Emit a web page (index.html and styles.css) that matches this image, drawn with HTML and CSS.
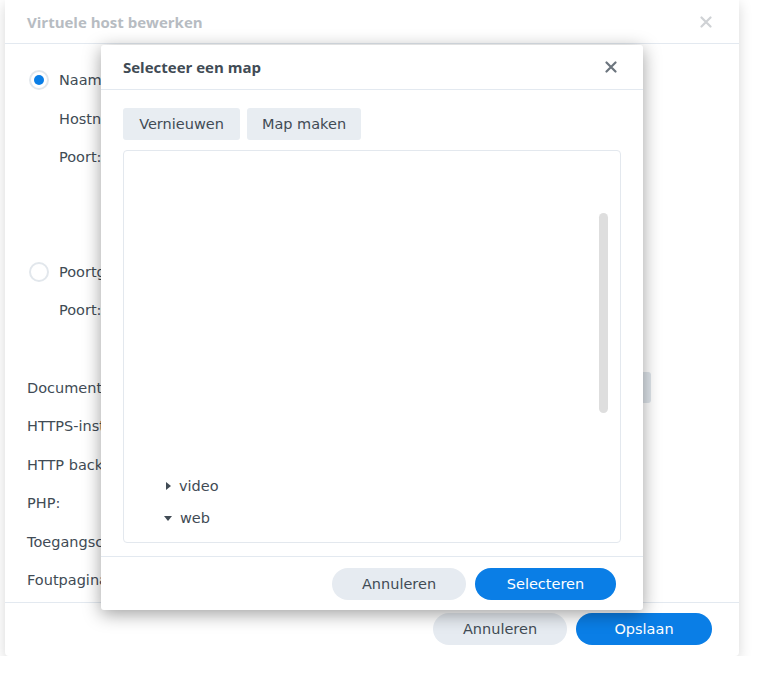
FILE: index.html
```html
<!DOCTYPE html>
<html lang="nl">
<head>
    <meta charset="UTF-8">
    <title>Virtuele host bewerken</title>
    <link rel="stylesheet" href="styles.css">
</head>
<body>
    <div class="window">
        <div class="win-header">
            <span class="win-title">Virtuele host bewerken</span>
            <svg class="close faded" width="12" height="12" viewBox="0 0 12 12"><path d="M1.5 1.5L10.5 10.5M10.5 1.5L1.5 10.5" stroke="currentColor" stroke-width="2.2" stroke-linecap="round"/></svg>
        </div>
        <div class="win-body">
            <div class="row"><span class="radio checked"></span><span>Naam</span></div>
            <div class="row indent"><span>Hostnaam:</span></div>
            <div class="row indent"><span>Poort:</span></div>
            <div class="spacer"></div>
            <div class="row"><span class="radio"></span><span>Poortgebaseerd</span></div>
            <div class="row indent"><span>Poort:</span></div>
            <div class="gap"></div>
            <div class="row"><span class="label">Documentroot:</span><span class="field"></span></div>
            <div class="row"><span class="label">HTTPS-instellingen:</span></div>
            <div class="row"><span class="label">HTTP back-endserver:</span></div>
            <div class="row"><span class="label">PHP:</span></div>
            <div class="row"><span class="label">Toegangscontroleprofiel:</span></div>
            <div class="row"><span class="label">Foutpaginaprofiel:</span></div>
        </div>
        <div class="win-footer">
            <button class="btn">Annuleren</button>
            <button class="btn primary">Opslaan</button>
        </div>
    </div>

    <div class="dialog">
        <div class="dlg-header">
            <span class="dlg-title">Selecteer een map</span>
            <svg class="close" width="12" height="12" viewBox="0 0 12 12"><path d="M1.5 1.5L10.5 10.5M10.5 1.5L1.5 10.5" stroke="currentColor" stroke-width="2.2" stroke-linecap="round"/></svg>
        </div>
        <div class="dlg-body">
            <div class="toolbar">
                <button class="tool">Vernieuwen</button>
                <button class="tool">Map maken</button>
            </div>
            <div class="tree">
                <div class="scrollbar"></div>
                <div class="tree-list">
                    <div class="node"><span class="arrow right"></span>video</div>
                    <div class="node"><span class="arrow down"></span>web</div>
                </div>
            </div>
        </div>
        <div class="dlg-footer">
            <button class="btn">Annuleren</button>
            <button class="btn primary wide">Selecteren</button>
        </div>
    </div>
</body>
</html>
```

FILE: styles.css
```css
/* Global */
body {
    margin: 0;
    padding: 0 0 0 5px;
    background: #fff;
    font-family: 'DejaVu Sans', Verdana, sans-serif;
    font-size: 14.5px;
    color: #414b55;
}
button {
    font-family: inherit;
    font-size: 14.5px;
    border: none;
    cursor: pointer;
}

/* Background window */
.window {
    width: 734px;
    height: 656px;
    background: #fff;
    border-radius: 0 0 4px 4px;
    box-shadow: 0 4px 14px rgba(0, 0, 0, 0.16);
    display: flex;
    flex-direction: column;
    overflow: hidden;
}
.win-header {
    height: 44px;
    border-bottom: 1px solid #e3e9f0;
    display: flex;
    align-items: center;
    justify-content: space-between;
    padding: 0 27px 0 22px;
    box-sizing: border-box;
}
.win-title {
    font-family: 'Open Sans', sans-serif;
    font-weight: 700;
    font-size: 15px;
    color: #b7bcc2;
}
.close {
    color: #6c757e;
}
.close.faded {
    color: #cfd2d5;
}
.win-body {
    flex: 1;
    padding: 17px 22px 0 22px;
}
.row {
    height: 38.5px;
    display: flex;
    align-items: center;
    white-space: nowrap;
}
.row.indent {
    padding-left: 32px;
}
.spacer {
    height: 76px;
}
.gap {
    height: 39px;
}
.label {
    width: 600px;
}
.field {
    width: 24px;
    height: 31px;
    background: #dfe5eb;
    border-radius: 3px;
}
.radio {
    width: 16px;
    height: 16px;
    border: 2px solid #e2e7ec;
    border-radius: 50%;
    margin: 0 10px 0 2px;
    box-sizing: content-box;
    position: relative;
    background: #fff;
}
.radio.checked::after {
    content: '';
    position: absolute;
    left: 3px;
    top: 3px;
    width: 10px;
    height: 10px;
    border-radius: 50%;
    background: #0a7ee6;
}
.win-footer {
    height: 54px;
    border-top: 1px solid #e3e9f0;
    display: flex;
    justify-content: flex-end;
    align-items: flex-start;
    gap: 9px;
    padding: 10px 27px 0 0;
    box-sizing: border-box;
}
.btn {
    height: 32px;
    width: 134px;
    border-radius: 16px;
    background: #e6ebf1;
    color: #414b55;
}
.btn.primary {
    width: 136px;
    background: #0a7ee6;
    color: #fff;
}
.btn.primary.wide {
    width: 141px;
}

/* Folder dialog */
.dialog {
    position: absolute;
    left: 101px;
    top: 45px;
    width: 542px;
    height: 565px;
    background: #fff;
    border-radius: 3px;
    box-shadow: 0 4px 18px rgba(0, 0, 0, 0.38);
    display: flex;
    flex-direction: column;
}
.dlg-header {
    height: 45px;
    border-bottom: 1px solid #e3e9f0;
    display: flex;
    align-items: center;
    justify-content: space-between;
    padding: 0 26px 0 22px;
    box-sizing: border-box;
}
.dlg-title {
    font-family: 'Open Sans', sans-serif;
    font-weight: 700;
    font-size: 15px;
    color: #414b55;
}
.dlg-body {
    flex: 1;
    padding: 18px 22px 13px 22px;
    display: flex;
    flex-direction: column;
}
.toolbar {
    display: flex;
    gap: 7px;
    margin-bottom: 10px;
}
.tool {
    height: 32px;
    padding: 0;
    border-radius: 3px;
    background: #e8edf2;
    color: #414b55;
    width: 117px;
}
.tool + .tool {
    width: 114px;
}
.tree {
    flex: 1;
    border: 1px solid #e3e8ee;
    border-radius: 4px;
    position: relative;
    display: flex;
    flex-direction: column;
    justify-content: flex-end;
    padding-bottom: 8px;
}
.scrollbar {
    position: absolute;
    left: 475px;
    top: 62px;
    width: 9px;
    height: 200px;
    border-radius: 5px;
    background: #dedede;
}
.node {
    height: 32px;
    display: flex;
    align-items: center;
    padding-left: 40px;
    font-size: 14.5px;
}
.arrow {
    width: 0;
    height: 0;
    margin-right: 8px;
}
.arrow.right {
    border-top: 4px solid transparent;
    border-bottom: 4px solid transparent;
    border-left: 5px solid #414b55;
    margin-left: 2px;
}
.arrow.down {
    border-left: 4px solid transparent;
    border-right: 4px solid transparent;
    border-top: 5px solid #414b55;
}
.dlg-footer {
    height: 54px;
    border-top: 1px solid #e3e9f0;
    display: flex;
    justify-content: flex-end;
    align-items: flex-start;
    gap: 9px;
    padding: 11px 27px 0 0;
    box-sizing: border-box;
}
```
